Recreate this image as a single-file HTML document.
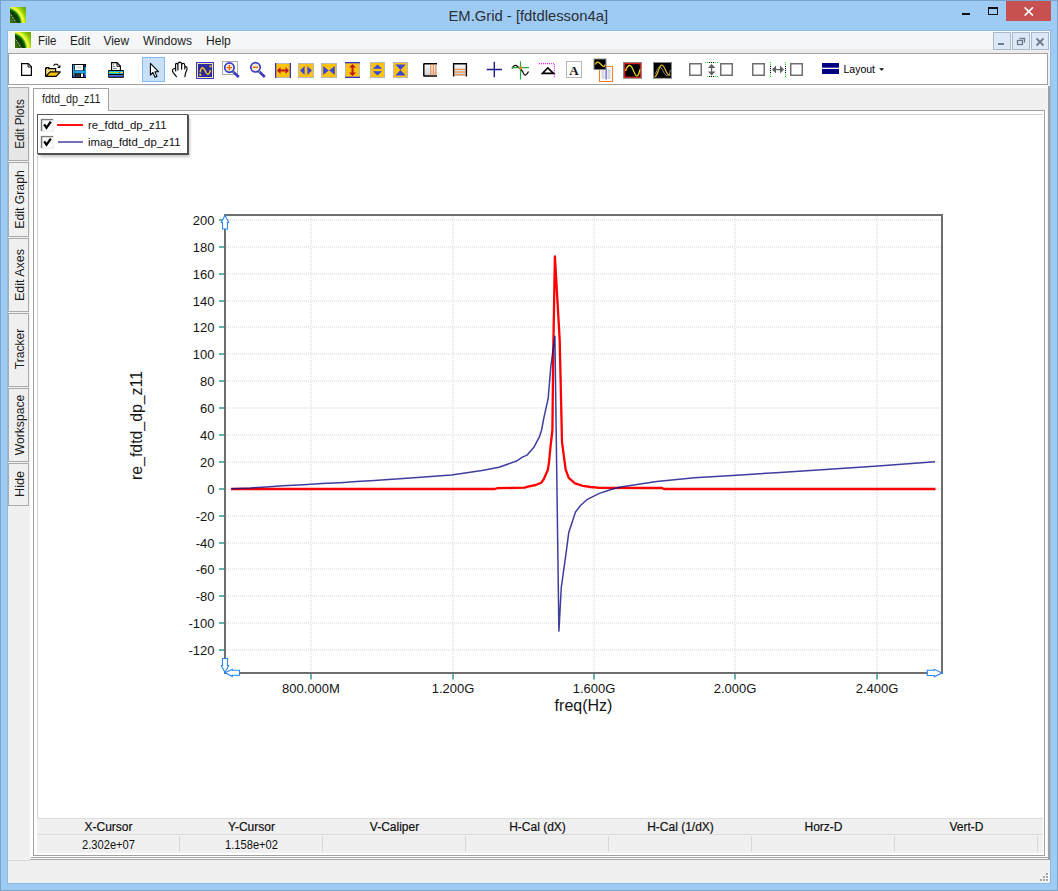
<!DOCTYPE html>
<html><head><meta charset="utf-8"><title>EM.Grid - [fdtdlesson4a]</title>
<style>
html,body{margin:0;padding:0;background:#9ECBF3;}
body{width:1058px;height:891px;overflow:hidden;position:relative;}
svg{position:absolute;left:0;top:0;display:block;font-family:"Liberation Sans",sans-serif;}
</style></head><body>
<svg width="1058" height="891" viewBox="0 0 1058 891">
<defs><filter id="blur" x="-10%" y="-10%" width="130%" height="140%"><feGaussianBlur stdDeviation="1.5"/></filter></defs>
<rect x="0" y="0" width="1058" height="891" fill="#9ECBF3" />
<rect x="0" y="0" width="1058" height="1" fill="#7AA3C9" />
<rect x="0" y="890" width="1058" height="1" fill="#7AA3C9" />
<rect x="0" y="0" width="1" height="891" fill="#7AA3C9" />
<rect x="1057" y="0" width="1" height="891" fill="#7AA3C9" />
<rect x="7" y="30" width="1044" height="854" fill="#8DBAE4" />
<rect x="8" y="31" width="1042" height="852" fill="#F0F0F0" />
<defs><radialGradient id="lg" cx="-0.3" cy="1.05" r="1.6" fx="-0.3" fy="1.05" gradientUnits="objectBoundingBox"><stop offset="0" stop-color="#6a7a10"/><stop offset="0.3" stop-color="#3a6a08"/><stop offset="0.48" stop-color="#0c3c04"/><stop offset="0.56" stop-color="#0a4a05"/><stop offset="0.62" stop-color="#40b010"/><stop offset="0.67" stop-color="#f8fa40"/><stop offset="0.74" stop-color="#e8f038"/><stop offset="0.8" stop-color="#a0e010"/><stop offset="0.9" stop-color="#80b808"/><stop offset="1" stop-color="#78a808"/></radialGradient></defs>
<g transform="translate(10,7)"><rect width="16" height="16" fill="url(#lg)"/><path d="M0 6.5 L6 15.5" stroke="#fff" stroke-width="1" stroke-dasharray="1 1" opacity="0.8"/></g>
<text x="448.5" y="20.8" font-size="15" fill="#2B2F36" textLength="159.5" lengthAdjust="spacingAndGlyphs" >EM.Grid - [fdtdlesson4a]</text>
<rect x="962" y="13" width="8" height="2" fill="#111" />
<rect x="988.5" y="7.5" width="9" height="7" fill="none" stroke="#111" stroke-width="1"/>
<rect x="988" y="7" width="10" height="2" fill="#111" />
<rect x="1006" y="1" width="45" height="20" fill="#C75050" />
<path d="M1024.6 7.4 L1033 15.6 M1033 7.4 L1024.6 15.6" stroke="#fff" stroke-width="1.5"/>
<rect x="8" y="31" width="1042" height="1" fill="#FCFCFD" />
<rect x="8" y="32" width="1042" height="17" fill="#F5F6F7" />
<rect x="8" y="49" width="1042" height="4" fill="#EDEDED" />
<g transform="translate(15,32)"><rect width="16" height="16" fill="url(#lg)"/><path d="M0 6.5 L6 15.5" stroke="#fff" stroke-width="1" stroke-dasharray="1 1" opacity="0.8"/></g>
<text x="38" y="45" font-size="12" fill="#1E1E1E" textLength="18.5" lengthAdjust="spacingAndGlyphs" >File</text>
<text x="70" y="45" font-size="12" fill="#1E1E1E" textLength="20.2" lengthAdjust="spacingAndGlyphs" >Edit</text>
<text x="103.5" y="45" font-size="12" fill="#1E1E1E" textLength="25.6" lengthAdjust="spacingAndGlyphs" >View</text>
<text x="143" y="45" font-size="12" fill="#1E1E1E" textLength="49" lengthAdjust="spacingAndGlyphs" >Windows</text>
<text x="206" y="45" font-size="12" fill="#1E1E1E" textLength="24.8" lengthAdjust="spacingAndGlyphs" >Help</text>
<rect x="993.5" y="32.5" width="17" height="17" fill="#DCE8F5" stroke="#A9B9CB"/>
<rect x="1012.5" y="32.5" width="17" height="17" fill="#DCE8F5" stroke="#A9B9CB"/>
<rect x="1031.5" y="32.5" width="17" height="17" fill="#DCE8F5" stroke="#A9B9CB"/>
<rect x="998" y="43" width="6" height="2" fill="#6D7B8A" />
<g fill="none" stroke="#6D7B8A" stroke-width="1.3"><rect x="1017.5" y="40.5" width="5" height="4"/><path d="M1019.5 38.5 H1024.5 V42.5"/></g>
<path d="M1036.5 38.5 L1043.5 45.5 M1043.5 38.5 L1036.5 45.5" stroke="#6D7B8A" stroke-width="1.8"/>
<rect x="8.5" y="53.5" width="1039" height="31" fill="#fff" stroke="#A0A0A0"/>
<rect x="8" y="85" width="1042" height="2" fill="#FBFBFB" />
<rect x="8.5" y="87.5" width="20" height="73" fill="#E6E6E6" stroke="#ABABAB"/>
<rect x="8.5" y="162.5" width="20" height="74" fill="#F0F0F0" stroke="#ABABAB"/>
<rect x="8.5" y="238.5" width="20" height="73" fill="#F0F0F0" stroke="#ABABAB"/>
<rect x="8.5" y="313.5" width="20" height="73" fill="#F0F0F0" stroke="#ABABAB"/>
<rect x="8.5" y="388.5" width="20" height="73" fill="#F0F0F0" stroke="#ABABAB"/>
<rect x="8.5" y="463.5" width="20" height="42" fill="#F0F0F0" stroke="#ABABAB"/>
<rect x="30" y="85" width="1018" height="774" fill="#FFFFFF" />
<rect x="1047" y="86" width="1" height="771" fill="#F4F4F4" />
<rect x="1048" y="86" width="2" height="774" fill="#A0A0A0" />
<rect x="30" y="859" width="1020" height="1" fill="#A0A0A0" />
<rect x="31" y="857" width="1017" height="1" fill="#A0A0A0" />
<rect x="109" y="88" width="938" height="22" fill="#F0F0F0" />
<rect x="33.5" y="110.5" width="1011" height="745" fill="#fff" stroke="#A0A0A0"/>
<path d="M33.5 111 V88.5 H108.5 V110.5" fill="#fff" stroke="#A0A0A0"/>
<rect x="34" y="110" width="74" height="1" fill="#fff" />
<text x="42" y="103" font-size="12" fill="#1E1E1E" textLength="58.5" lengthAdjust="spacingAndGlyphs" >fdtd_dp_z11</text>
<rect x="37" y="114" width="1006" height="1" fill="#D4D4D4" />
<rect x="37" y="114" width="1" height="704" fill="#D4D4D4" />
<rect x="37" y="818" width="1006" height="35" fill="#F0F0F0" />
<rect x="37" y="818" width="1006" height="1" fill="#DCDCDC" />
<rect x="37" y="834" width="1006" height="1" fill="#DCDCDC" />
<text x="108.5" y="831.4" font-size="12" fill="#111" text-anchor="middle" stroke="#111" stroke-width="0.2">X-Cursor</text>
<text x="108.5" y="849" font-size="12" fill="#111" text-anchor="middle" textLength="53" lengthAdjust="spacingAndGlyphs" >2.302e+07</text>
<rect x="179" y="836" width="1" height="16" fill="#D8D8D8" />
<text x="251.5" y="831.4" font-size="12" fill="#111" text-anchor="middle" stroke="#111" stroke-width="0.2">Y-Cursor</text>
<text x="251.5" y="849" font-size="12" fill="#111" text-anchor="middle" textLength="53" lengthAdjust="spacingAndGlyphs" >1.158e+02</text>
<rect x="322" y="836" width="1" height="16" fill="#D8D8D8" />
<text x="394.5" y="831.4" font-size="12" fill="#111" text-anchor="middle" stroke="#111" stroke-width="0.2">V-Caliper</text>
<rect x="465" y="836" width="1" height="16" fill="#D8D8D8" />
<text x="537.5" y="831.4" font-size="12" fill="#111" text-anchor="middle" stroke="#111" stroke-width="0.2">H-Cal (dX)</text>
<rect x="608" y="836" width="1" height="16" fill="#D8D8D8" />
<text x="680.5" y="831.4" font-size="12" fill="#111" text-anchor="middle" stroke="#111" stroke-width="0.2">H-Cal (1/dX)</text>
<rect x="751" y="836" width="1" height="16" fill="#D8D8D8" />
<text x="823.5" y="831.4" font-size="12" fill="#111" text-anchor="middle" stroke="#111" stroke-width="0.2">Horz-D</text>
<rect x="894" y="836" width="1" height="16" fill="#D8D8D8" />
<text x="966.5" y="831.4" font-size="12" fill="#111" text-anchor="middle" stroke="#111" stroke-width="0.2">Vert-D</text>
<rect x="1037" y="836" width="1" height="16" fill="#D8D8D8" />
<rect x="8" y="860" width="1042" height="23" fill="#F0F0F0" />
<rect x="8" y="860" width="22" height="1" fill="#DADADA" />
<rect x="1047" y="874" width="2" height="2" fill="#FFFFFF" />
<rect x="1046" y="873" width="2" height="2" fill="#A4A4A4" />
<rect x="1044" y="877" width="2" height="2" fill="#FFFFFF" />
<rect x="1043" y="876" width="2" height="2" fill="#A4A4A4" />
<rect x="1047" y="877" width="2" height="2" fill="#FFFFFF" />
<rect x="1046" y="876" width="2" height="2" fill="#A4A4A4" />
<rect x="1041" y="880" width="2" height="2" fill="#FFFFFF" />
<rect x="1040" y="879" width="2" height="2" fill="#A4A4A4" />
<rect x="1044" y="880" width="2" height="2" fill="#FFFFFF" />
<rect x="1043" y="879" width="2" height="2" fill="#A4A4A4" />
<rect x="1047" y="880" width="2" height="2" fill="#FFFFFF" />
<rect x="1046" y="879" width="2" height="2" fill="#A4A4A4" />
<path d="M226 650 H941 M226 623 H941 M226 596 H941 M226 569 H941 M226 543 H941 M226 516 H941 M226 489 H941 M226 462 H941 M226 435 H941 M226 408 H941 M226 381 H941 M226 354 H941 M226 327 H941 M226 301 H941 M226 274 H941 M226 247 H941 M226 220 H941 M311 216 V672 M453 216 V672 M594 216 V672 M735 216 V672 M877 216 V672" stroke="#E4E4E4" stroke-width="1.6" stroke-dasharray="1 1" fill="none"/>
<rect x="225" y="215" width="717" height="458" fill="none" stroke="#6E6E6E" stroke-width="2"/>
<rect x="219" y="649" width="5" height="2" fill="#68B0AE" />
<text x="214.5" y="655.2" font-size="13" fill="#141414" text-anchor="end" >-120</text>
<rect x="219" y="622" width="5" height="2" fill="#68B0AE" />
<text x="214.5" y="628.2" font-size="13" fill="#141414" text-anchor="end" >-100</text>
<rect x="219" y="595" width="5" height="2" fill="#68B0AE" />
<text x="214.5" y="601.2" font-size="13" fill="#141414" text-anchor="end" >-80</text>
<rect x="219" y="568" width="5" height="2" fill="#68B0AE" />
<text x="214.5" y="574.2" font-size="13" fill="#141414" text-anchor="end" >-60</text>
<rect x="219" y="542" width="5" height="2" fill="#68B0AE" />
<text x="214.5" y="548.2" font-size="13" fill="#141414" text-anchor="end" >-40</text>
<rect x="219" y="515" width="5" height="2" fill="#68B0AE" />
<text x="214.5" y="521.2" font-size="13" fill="#141414" text-anchor="end" >-20</text>
<rect x="219" y="488" width="5" height="2" fill="#68B0AE" />
<text x="214.5" y="494.2" font-size="13" fill="#141414" text-anchor="end" >0</text>
<rect x="219" y="461" width="5" height="2" fill="#68B0AE" />
<text x="214.5" y="467.2" font-size="13" fill="#141414" text-anchor="end" >20</text>
<rect x="219" y="434" width="5" height="2" fill="#68B0AE" />
<text x="214.5" y="440.2" font-size="13" fill="#141414" text-anchor="end" >40</text>
<rect x="219" y="407" width="5" height="2" fill="#68B0AE" />
<text x="214.5" y="413.2" font-size="13" fill="#141414" text-anchor="end" >60</text>
<rect x="219" y="380" width="5" height="2" fill="#68B0AE" />
<text x="214.5" y="386.2" font-size="13" fill="#141414" text-anchor="end" >80</text>
<rect x="219" y="353" width="5" height="2" fill="#68B0AE" />
<text x="214.5" y="359.2" font-size="13" fill="#141414" text-anchor="end" >100</text>
<rect x="219" y="326" width="5" height="2" fill="#68B0AE" />
<text x="214.5" y="332.2" font-size="13" fill="#141414" text-anchor="end" >120</text>
<rect x="219" y="300" width="5" height="2" fill="#68B0AE" />
<text x="214.5" y="306.2" font-size="13" fill="#141414" text-anchor="end" >140</text>
<rect x="219" y="273" width="5" height="2" fill="#68B0AE" />
<text x="214.5" y="279.2" font-size="13" fill="#141414" text-anchor="end" >160</text>
<rect x="219" y="246" width="5" height="2" fill="#68B0AE" />
<text x="214.5" y="252.2" font-size="13" fill="#141414" text-anchor="end" >180</text>
<rect x="219" y="219" width="5" height="2" fill="#68B0AE" />
<text x="214.5" y="225.2" font-size="13" fill="#141414" text-anchor="end" >200</text>
<rect x="310" y="674" width="2" height="5.5" fill="#68B0AE" />
<text x="311" y="692.8" font-size="13" fill="#141414" text-anchor="middle" >800.000M</text>
<rect x="452" y="674" width="2" height="5.5" fill="#68B0AE" />
<text x="453" y="692.8" font-size="13" fill="#141414" text-anchor="middle" >1.200G</text>
<rect x="593" y="674" width="2" height="5.5" fill="#68B0AE" />
<text x="594" y="692.8" font-size="13" fill="#141414" text-anchor="middle" >1.600G</text>
<rect x="734" y="674" width="2" height="5.5" fill="#68B0AE" />
<text x="735" y="692.8" font-size="13" fill="#141414" text-anchor="middle" >2.000G</text>
<rect x="876" y="674" width="2" height="5.5" fill="#68B0AE" />
<text x="877" y="692.8" font-size="13" fill="#141414" text-anchor="middle" >2.400G</text>
<text x="583.5" y="710.8" font-size="16" fill="#141414" text-anchor="middle" >freq(Hz)</text>
<text transform="translate(142.2 425.5) rotate(-90)" font-size="16" fill="#141414" text-anchor="middle" textLength="109" lengthAdjust="spacingAndGlyphs">re_fdtd_dp_z11</text>
<polyline points="231,489 495,489 497,488.2 524.6,487.7 527.9,486.6 535.7,485 541.2,482.7 543.6,479.5 547.9,469.7 549.1,461.4 550.6,445.7 551.3,440 552.4,430 553.3,350 554.9,256.5 559.7,340 562,441.8 565.6,469.3 568.7,477.9 575,483.4 582.9,485.8 590.7,487 600,487.8 662,488 664,489 935.5,489" fill="none" stroke="#FF0000" stroke-width="2.3" stroke-linejoin="round"/>
<polyline points="231.4,488.8 250.7,488 265.8,486.9 283.2,485.7 303.7,484.7 321.8,483.6 340,482.7 356.6,481.6 374.8,480.4 385,479.8 414,477.8 451.5,474.9 482,470.6 499,467.2 516,461.3 522.4,457.1 527.1,455.1 534.1,446.9 539.6,436.3 541.6,430 543.5,419.7 548.2,398.1 550.9,365.8 554.9,336.2 556.3,440 558.9,631.1 561.3,587.3 566,553.7 568.7,532.8 575.5,512 580.5,505.5 587.4,499.3 599.3,493.4 608,490.5 619,487.3 656.7,481.6 694.5,477.8 732.3,475.5 780,472.4 874.5,466.2 935,461.8" fill="none" stroke="#14148A" stroke-opacity="0.82" stroke-width="1.5" stroke-linejoin="round"/>
<path d="M225 215.2 L228.7 222.5 H227.5 V229 H222.5 V222.5 H221.3 Z" fill="#FFFFFF" stroke="#2B86F2" stroke-width="1.1"/>
<path d="M225 672.6 L228.7 665.5 H227.5 V658.5 H222.5 V665.5 H221.3 Z" fill="#FFFFFF" stroke="#2B86F2" stroke-width="1.1"/>
<path d="M225.2 672.8 L232.3 669.3 V670.3 H239.5 V675.3 H232.3 V676.5 Z" fill="#FFFFFF" stroke="#2B86F2" stroke-width="1.1"/>
<path d="M942 673 L934.3 669.3 V670.3 H927.3 V675.5 H934.3 V676.8 Z" fill="#FFFFFF" stroke="#2B86F2" stroke-width="1.1"/>
<rect x="40" y="117" width="150" height="40" fill="#000" opacity="0.22" filter="url(#blur)"/>
<rect x="37.5" y="114.5" width="150" height="39" fill="#fff" stroke="#5A5A5A" stroke-width="1"/>
<rect x="187" y="115" width="2" height="40" fill="#505050" />
<rect x="38" y="153" width="151" height="2" fill="#505050" />
<rect x="41" y="119" width="12" height="12" fill="#FFFFFF" stroke="#E6E6E6" stroke-width="1"/>
<path d="M41.6 131 V119.6 H53" fill="none" stroke="#7A7A7A" stroke-width="1.4"/>
<path d="M44.2 124.3 L46.5 127.8 L50.8 121.6" fill="none" stroke="#000" stroke-width="2.3"/>
<rect x="41" y="136" width="12" height="12" fill="#FFFFFF" stroke="#E6E6E6" stroke-width="1"/>
<path d="M41.6 148 V136.6 H53" fill="none" stroke="#7A7A7A" stroke-width="1.4"/>
<path d="M44.2 141.3 L46.5 144.8 L50.8 138.6" fill="none" stroke="#000" stroke-width="2.3"/>
<rect x="57" y="124" width="26" height="2" fill="#FF1010" />
<rect x="58" y="141" width="25" height="2" fill="#7272B8" />
<text x="88" y="129" font-size="11" fill="#111" textLength="78.5" lengthAdjust="spacingAndGlyphs" >re_fdtd_dp_z11</text>
<text x="88" y="146" font-size="11" fill="#111" textLength="92.5" lengthAdjust="spacingAndGlyphs" >imag_fdtd_dp_z11</text>
<text transform="translate(24.3 124) rotate(-90)" font-size="12" fill="#1A1A1A" text-anchor="middle" textLength="49.5" lengthAdjust="spacingAndGlyphs">Edit Plots</text>
<text transform="translate(24.3 199.5) rotate(-90)" font-size="12" fill="#1A1A1A" text-anchor="middle" textLength="58.5" lengthAdjust="spacingAndGlyphs">Edit Graph</text>
<text transform="translate(24.3 275) rotate(-90)" font-size="12" fill="#1A1A1A" text-anchor="middle" textLength="52" lengthAdjust="spacingAndGlyphs">Edit Axes</text>
<text transform="translate(24.3 349) rotate(-90)" font-size="12" fill="#1A1A1A" text-anchor="middle" textLength="40.5" lengthAdjust="spacingAndGlyphs">Tracker</text>
<text transform="translate(24.3 425) rotate(-90)" font-size="12" fill="#1A1A1A" text-anchor="middle" textLength="60.5" lengthAdjust="spacingAndGlyphs">Workspace</text>
<text transform="translate(24.3 484) rotate(-90)" font-size="12" fill="#1A1A1A" text-anchor="middle" textLength="26" lengthAdjust="spacingAndGlyphs">Hide</text>
<path d="M21.6 63.6 H28.3 L31.4 66.7 V75.4 H21.6 Z" fill="#fff" stroke="#000" stroke-width="1.2"/>
<path d="M28 63.8 V67 H31.2" fill="none" stroke="#000" stroke-width="0.9"/>
<defs><pattern id="chk" width="2" height="2" patternUnits="userSpaceOnUse"><rect width="2" height="2" fill="#FFF6D0"/><rect width="1" height="1" fill="#F8C820"/><rect x="1" y="1" width="1" height="1" fill="#F8C820"/></pattern></defs>
<path d="M46.2 68.2 H55.5 V71.6 H50 L46.2 75.8 Z" fill="url(#chk)"/>
<path d="M45.6 76.6 V68.3 H46.4 V67.6 H48.7 V68.6 H55.6 V71.8" fill="none" stroke="#000" stroke-width="1.2"/>
<path d="M45.8 76.4 L50 71.8 H60.3 L56.2 76.4 Z" fill="#F8C000" stroke="#000" stroke-width="1.15" stroke-linejoin="round"/>
<path d="M53.5 65.6 L54.9 64.3 H57.2 L58.4 65.6" fill="none" stroke="#000" stroke-width="1.1"/>
<path d="M57 67.9 H60.3 V64.8 Z" fill="#000"/>
<rect x="72" y="64" width="14" height="14" fill="#000" />
<rect x="73" y="65" width="1.5" height="12" fill="#1AA8E8" />
<rect x="84.5" y="67" width="1.5" height="10" fill="#1AA8E8" />
<rect x="74.5" y="70.6" width="10" height="2.7" fill="#1AA8E8" />
<rect x="75" y="65" width="8" height="5.2" fill="#fff" />
<rect x="76.3" y="66.2" width="5.5" height="2.5" fill="#DCDCDC" />
<rect x="75.5" y="73.6" width="4.5" height="3.4" fill="#333" />
<rect x="81" y="73.6" width="2" height="3.4" fill="#fff" />
<rect x="73" y="75" width="1.5" height="2" fill="#4848E0" />
<rect x="84.5" y="75" width="1.5" height="2" fill="#4848E0" />
<rect x="84.3" y="65.3" width="1" height="1" fill="#777" />
<path d="M111.6 70.5 V62.6 H117 L120.4 66 V70.5" fill="#fff" stroke="#000" stroke-width="1.1"/>
<path d="M117 62.8 V66.3 H120.2" fill="none" stroke="#000" stroke-width="1"/>
<rect x="113" y="64.3" width="1" height="1" fill="#666" />
<rect x="113" y="66.1" width="2.2" height="0.9" fill="#777" />
<rect x="113" y="68" width="3.8" height="0.9" fill="#777" />
<rect x="108.2" y="70" width="15.6" height="7.8" fill="#000" />
<rect x="109" y="71" width="14" height="1" fill="#18B8F0" />
<rect x="109" y="72" width="14" height="1" fill="#A8E020" />
<rect x="119" y="72" width="1.3" height="1" fill="#E02020" />
<rect x="120.3" y="72" width="2.7" height="1" fill="#F0E020" />
<rect x="109" y="73" width="14" height="1" fill="#18B8F0" />
<rect x="109" y="75" width="14" height="0.9" fill="#7090D0" />
<rect x="109" y="75.9" width="14" height="1.1" fill="#3038C0" />
<rect x="142.5" y="57.5" width="22" height="24" fill="#C8E1F8" stroke="#84B9EC"/>
<path d="M150.4 63.3 V75 L152.9 72.5 L155 77.3 L157 76.4 L154.9 71.7 H158.4 Z" fill="#fff" stroke="#000" stroke-width="1.1" stroke-linejoin="round"/>
<path d="M176.4 76.6 L173.2 72.6 Q171.9 70.6 172.7 69.5 Q173.6 68.3 175.6 68.6 L175.7 71 M175.6 69.5 V66 Q175.2 63.4 176.6 63.3 Q177.9 63.3 177.9 65.6 V70 M177.9 66 V63.8 Q178.4 62.1 179.9 62.1 Q181.6 62.2 181.6 64.2 V69.2 M181.6 64.6 Q181.9 63.3 183.2 63.3 Q184.8 63.5 184.8 65.6 V69 M184.8 67.3 Q185.6 66.3 186.6 66.9 Q187.4 67.6 186.9 69.6 L185.4 73.5 L184.9 76.6" fill="none" stroke="#000" stroke-width="1.15" stroke-linecap="round" stroke-linejoin="round"/>
<rect x="196" y="62" width="18" height="17" fill="#3A3AD2" />
<rect x="197" y="63" width="16" height="15" fill="#F3E2A6" />
<rect x="198" y="64" width="14" height="13" fill="#2C2C9C" />
<path d="M200 72.5 Q201.3 66 203.6 68.5 Q205 70 206 72.5 Q207.8 76 209.6 72.6 Q210.2 71.2 210.5 70" fill="none" stroke="#F2C51B" stroke-width="1.5"/>
<rect x="209.5" y="65.3" width="2" height="2" fill="#F2C51B" />
<rect x="199.3" y="73.8" width="2" height="2" fill="#F2C51B" />
<rect x="222.5" y="61.5" width="15" height="13" fill="none" stroke="#ABABAB"/>
<path d="M232.6 71.2 L238.8 77" stroke="#3A3AC8" stroke-width="2.6"/>
<path d="M232.3 70.8 L234 72.6" stroke="#70C030" stroke-width="1.5"/>
<circle cx="229.4" cy="67.6" r="4.7" fill="#F5EDC8" stroke="#3A3AD0" stroke-width="1.7"/>
<path d="M229.4 65 V70.2 M226.8 67.6 H232" stroke="#F06010" stroke-width="1.3"/>
<path d="M258.6 71 L264.8 77" stroke="#3A3AC8" stroke-width="2.6"/>
<path d="M258.3 70.5 L260 72.3" stroke="#70C030" stroke-width="1.5"/>
<circle cx="255.5" cy="67.3" r="4.7" fill="#F5EDC8" stroke="#3A3AD0" stroke-width="1.7"/>
<path d="M253 67.3 H258" stroke="#F06010" stroke-width="1.3"/>
<rect x="275.5" y="63.5" width="15" height="14" fill="#FFC20E" stroke="#B8B8B8"/>
<rect x="275" y="63" width="1.3" height="15" fill="#3333CC" />
<rect x="289.7" y="63" width="1.3" height="15" fill="#3333CC" />
<path d="M277 70.5 L280.5 67 V69.5 H285.5 V67 L289 70.5 L285.5 74 V71.5 H280.5 V74 Z" fill="#C01818"/>
<rect x="298.5" y="63.5" width="15" height="14" fill="#FFC20E" stroke="#B8B8B8"/>
<path d="M304.6 66 V75 L300 70.5 Z M307.4 66 V75 L312 70.5 Z" fill="#3A48D8"/>
<rect x="321.5" y="63.5" width="15" height="14" fill="#FFC20E" stroke="#B8B8B8"/>
<path d="M323.2 66 V75 L328.8 70.5 Z M334.8 66 V75 L329.2 70.5 Z" fill="#3A48D8"/>
<rect x="345.5" y="62.5" width="14" height="15" fill="#FFC20E" stroke="#B8B8B8"/>
<rect x="345" y="62" width="15" height="1.3" fill="#3333CC" />
<rect x="345" y="76.7" width="15" height="1.3" fill="#3333CC" />
<path d="M352.5 64 L356 67.5 H353.5 V72.5 H356 L352.5 76 L349 72.5 H351.5 V67.5 H349 Z" fill="#C01818"/>
<rect x="370.5" y="62.5" width="14" height="15" fill="#FFC20E" stroke="#B8B8B8"/>
<path d="M372.8 68.8 H382.2 L377.5 64.5 Z M372.8 71.2 H382.2 L377.5 75.5 Z" fill="#3A48D8"/>
<rect x="393.5" y="62.5" width="14" height="15" fill="#FFC20E" stroke="#B8B8B8"/>
<path d="M395.3 64.5 H405.7 L400.5 70 Z M395.3 75.5 H405.7 L400.5 70 Z" fill="#3A48D8"/>
<defs><linearGradient id="gg" x1="0" y1="0" x2="0" y2="1"><stop offset="0" stop-color="#F8F8F8"/><stop offset="1" stop-color="#D0D0D0"/></linearGradient></defs>
<rect x="423.5" y="64" width="13.5" height="12" fill="url(#gg)" />
<path d="M423.8 63.8 H437 M423.8 76 H437 M423.8 63.5 V76.4" stroke="#000" stroke-width="1.4" fill="none"/>
<path d="M430.8 64.5 V75.5 M433.3 64.5 V75.5 M435.8 64.5 V75.5" stroke="#F08030" stroke-width="1"/>
<rect x="453.5" y="64" width="13" height="12" fill="url(#gg)" />
<path d="M453.6 76.4 V63.8 H466.4 V76.4" stroke="#000" stroke-width="1.4" fill="none"/>
<path d="M454 69.3 H466 M454 72 H466 M454 74.7 H466" stroke="#F08030" stroke-width="1"/>
<path d="M486.7 69.5 H502 M494.3 61.7 V77.2" stroke="#1C1C8E" stroke-width="1.4"/>
<path d="M512 68.5 Q514.5 63.5 517.5 66.5 L520.5 69 Q522.5 71 523.5 73.5 Q525.5 77.5 528.5 71.5" fill="none" stroke="#000" stroke-width="1.2"/>
<path d="M511.8 67.6 H529 M520.5 61.2 V79.4" stroke="#28A838" stroke-width="1.2"/>
<rect x="519.3" y="66.4" width="2.6" height="2.6" fill="#F08030" />
<path d="M539 63.6 H554.4 V78" fill="none" stroke="#FF20FF" stroke-width="1.1" stroke-dasharray="1 1"/>
<path d="M542.5 73.4 L547.8 67.8 L553.6 73.4 Z" fill="none" stroke="#000" stroke-width="1.6"/>
<rect x="566.5" y="61.5" width="15" height="16" fill="#fff" stroke="#B8B8B8"/>
<text x="574" y="74.5" font-family="Liberation Serif" font-weight="bold" font-size="13" fill="#111" text-anchor="middle">A</text>
<rect x="599.5" y="66.5" width="13" height="15" fill="#fff" stroke="#F08030" stroke-width="1.1"/>
<path d="M601.5 70 H604.5 M601.5 72 H604.5 M601.5 74 H604.5 M601.5 76 H604.5 M601.5 78 H604.5 M607.5 70 H610.5 M607.5 72 H610.5 M607.5 74 H610.5 M607.5 76 H610.5 M607.5 78 H610.5" stroke="#A0A0A0" stroke-width="0.8"/>
<rect x="605.6" y="68.5" width="1" height="11" fill="#3030D0" />
<rect x="594" y="59" width="12" height="10.5" fill="#000" stroke="#888" stroke-width="1"/>
<path d="M595.3 64.5 Q597 60.5 599.5 63 T603.5 66.5 Q604.7 67 605 64.5" fill="none" stroke="#F0D020" stroke-width="1.2"/>
<rect x="623" y="62" width="19" height="16.8" fill="#888"/>
<rect x="624.6" y="63.6" width="15.8" height="13.6" fill="#000" stroke="#E01818" stroke-width="1.2"/>
<path d="M625.5 71 Q628.5 62 632 67.5 Q634 72 635.5 75 Q638 78.5 640 69.5" fill="none" stroke="#F0E020" stroke-width="1.2"/>
<rect x="653" y="62" width="19" height="16.8" fill="#888"/>
<rect x="654" y="63" width="17" height="14.8" fill="#000"/>
<path d="M655.5 74 Q659 63 662 69 Q664.5 75 667 76 Q669.5 76 670.5 70" fill="none" stroke="#888" stroke-width="1"/>
<path d="M654.5 77 Q657 76 659 69 Q661.5 61 665 69 Q667.5 76 670.5 75" fill="none" stroke="#F0C020" stroke-width="1.1"/>
<rect x="689.75" y="63.75" width="11.5" height="11.5" fill="#fff" stroke="#707070" stroke-width="1.5"/>
<rect x="720.75" y="63.75" width="11.5" height="11.5" fill="#fff" stroke="#707070" stroke-width="1.5"/>
<rect x="752.75" y="63.75" width="11.5" height="11.5" fill="#fff" stroke="#707070" stroke-width="1.5"/>
<rect x="790.75" y="63.75" width="11.5" height="11.5" fill="#fff" stroke="#707070" stroke-width="1.5"/>
<path d="M705 62.5 H718 M707 76.5 H718" stroke="#20E020" stroke-width="1" stroke-dasharray="1.2 0.8"/>
<path d="M709 62.5 H714 M709 76.5 H714" stroke="#000" stroke-width="1" stroke-dasharray="1 1"/>
<path d="M711.5 64 L715.5 68 H708 Z M711.5 75.5 L715.5 71.5 H708 Z" fill="#606060"/>
<rect x="711" y="67" width="1.2" height="5" fill="#606060" />
<path d="M770.5 62 V77.5 M785.5 62 V77.5" stroke="#20E020" stroke-width="1" stroke-dasharray="1.2 0.8"/>
<path d="M770.5 66 V73 M785.5 66 V73" stroke="#000" stroke-width="1" stroke-dasharray="1 1"/>
<path d="M772 69.5 L776 65.5 V73.5 Z M784 69.5 L780 65.5 V73.5 Z" fill="#606060"/>
<rect x="775" y="69" width="6" height="1.2" fill="#606060" />
<rect x="822" y="63" width="17" height="4.7" fill="#000080" />
<rect x="822" y="69" width="17" height="5" fill="#000080" />
<text x="843.5" y="72.7" font-size="11" fill="#000" textLength="31.5" lengthAdjust="spacingAndGlyphs" >Layout</text>
<path d="M879.2 68.2 H884 L881.6 70.8 Z" fill="#000"/>
</svg>
</body></html>
